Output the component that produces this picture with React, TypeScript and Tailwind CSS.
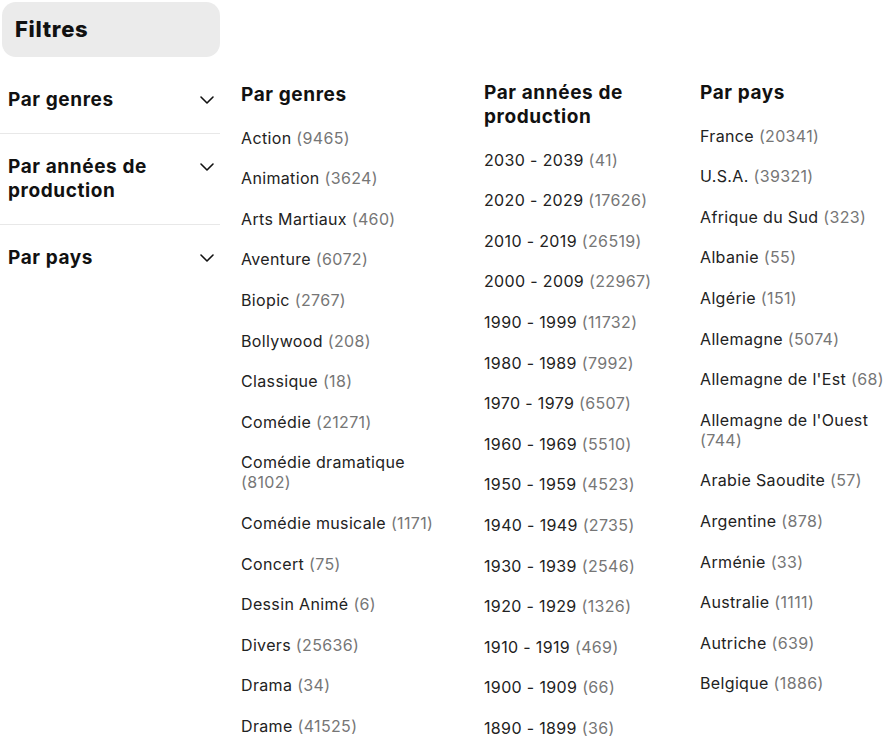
import React from 'react';
import { ChevronDown } from 'lucide-react';

type Entry = [string, number];

const genres: Entry[] = [
  ['Action', 9465],
  ['Animation', 3624],
  ['Arts Martiaux', 460],
  ['Aventure', 6072],
  ['Biopic', 2767],
  ['Bollywood', 208],
  ['Classique', 18],
  ['Comédie', 21271],
  ['Comédie dramatique', 8102],
  ['Comédie musicale', 1171],
  ['Concert', 75],
  ['Dessin Animé', 6],
  ['Divers', 25636],
  ['Drama', 34],
  ['Drame', 41525],
];

const decades: Entry[] = [
  ['2030 - 2039', 41],
  ['2020 - 2029', 17626],
  ['2010 - 2019', 26519],
  ['2000 - 2009', 22967],
  ['1990 - 1999', 11732],
  ['1980 - 1989', 7992],
  ['1970 - 1979', 6507],
  ['1960 - 1969', 5510],
  ['1950 - 1959', 4523],
  ['1940 - 1949', 2735],
  ['1930 - 1939', 2546],
  ['1920 - 1929', 1326],
  ['1910 - 1919', 469],
  ['1900 - 1909', 66],
  ['1890 - 1899', 36],
];

const countries: Entry[] = [
  ['France', 20341],
  ['U.S.A.', 39321],
  ['Afrique du Sud', 323],
  ['Albanie', 55],
  ['Algérie', 151],
  ['Allemagne', 5074],
  ["Allemagne de l'Est", 68],
  ["Allemagne de l'Ouest", 744],
  ['Arabie Saoudite', 57],
  ['Argentine', 878],
  ['Arménie', 33],
  ['Australie', 1111],
  ['Autriche', 639],
  ['Belgique', 1886],
];

function Column({ title, items, className }: { title: string; items: Entry[]; className: string }) {
  return (
    <div className={`flex flex-col gap-[20.6px] ${className}`}>
      <h3 className="text-[19px] leading-6 font-bold tracking-[0.6px] text-[#111]">{title}</h3>
      {items.map(([label, n]) => (
        <a key={label} className="text-[16px] leading-5 tracking-[0.35px] text-[#222] cursor-pointer">
          {label} <span className="text-[#767676]">({n})</span>
        </a>
      ))}
    </div>
  );
}

function SideItem({ label }: { label: string }) {
  return (
    <button className="w-full flex items-start justify-between pl-2 pr-[1px] py-[21px] border-b border-[#e8e8e8] last:border-b-0 text-left">
      <span className="text-[19px] leading-6 font-bold tracking-[0.6px] text-[#111] max-w-[160px]">{label}</span>
      <ChevronDown className="w-6 h-6 text-[#111]" strokeWidth={1.6} />
    </button>
  );
}

export default function App() {
  return (
    <div className="flex w-[893px] h-[739px] overflow-hidden bg-white font-['Inter',sans-serif]">
      <aside className="w-[220px] shrink-0">
        <div className="ml-[2px] mt-[2px] h-[55px] rounded-[14px] bg-[#ebebeb] flex items-center px-[13px]">
          <h2 className="text-[22px] font-extrabold tracking-[0.7px] text-[#111]">Filtres</h2>
        </div>
        <div className="mt-[10px]">
          <SideItem label="Par genres" />
          <SideItem label="Par années de production" />
          <SideItem label="Par pays" />
        </div>
      </aside>
      <main className="flex pl-[21px] pt-[81px]">
        <Column title="Par genres" items={genres} className="w-[243px] pr-[33px] mt-[2px]" />
        <Column title="Par années de production" items={decades} className="w-[216px] pr-[20px]" />
        <Column title="Par pays" items={countries} className="w-[193px]" />
      </main>
    </div>
  );
}
